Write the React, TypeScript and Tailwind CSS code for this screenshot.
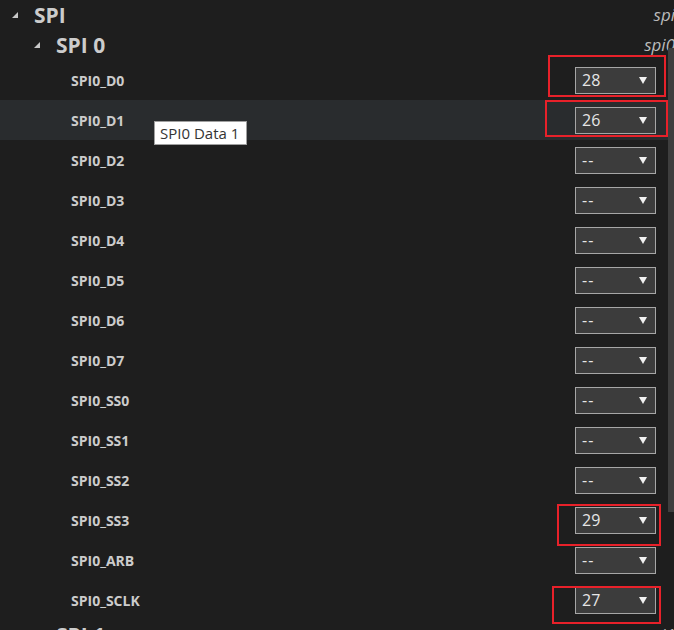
import { CSSProperties } from 'react';

type Pin = {
  name: string;
  value: string;
  mark?: { left: number; top: number; width: number; height: number };
};

const pins: Pin[] = [
  { name: 'SPI0_D0', value: '28', mark: { left: -27, top: -12, width: 118, height: 42 } },
  { name: 'SPI0_D1', value: '26', mark: { left: -30, top: -7, width: 123, height: 37 } },
  { name: 'SPI0_D2', value: '--' },
  { name: 'SPI0_D3', value: '--' },
  { name: 'SPI0_D4', value: '--' },
  { name: 'SPI0_D5', value: '--' },
  { name: 'SPI0_D6', value: '--' },
  { name: 'SPI0_D7', value: '--' },
  { name: 'SPI0_SS0', value: '--' },
  { name: 'SPI0_SS1', value: '--' },
  { name: 'SPI0_SS2', value: '--' },
  { name: 'SPI0_SS3', value: '29', mark: { left: -18, top: -3, width: 104, height: 42 } },
  { name: 'SPI0_ARB', value: '--' },
  { name: 'SPI0_SCLK', value: '27', mark: { left: -23, top: -1, width: 109, height: 38 } },
];

function Twisty() {
  return (
    <svg width="7" height="7" viewBox="0 0 7 7" className="shrink-0">
      <polygon points="6,0 6,6 0,6" fill="#c8c8c8" />
    </svg>
  );
}

function PinSelect({ pin }: { pin: Pin }) {
  const markStyle: CSSProperties | undefined = pin.mark
    ? { left: pin.mark.left, top: pin.mark.top, width: pin.mark.width, height: pin.mark.height }
    : undefined;
  return (
    <div className="relative">
      <div className="flex h-[27px] w-[81px] items-center justify-between border border-[#a6a6a6] bg-[#3c3c3c] pl-[6px] pr-[8px] text-[16px] text-[#e6e6e6]">
        <span className={pin.value === '--' ? 'tracking-[1px]' : ''}>{pin.value}</span>
        <svg width="8" height="7" viewBox="0 0 8 7">
          <polygon points="0,0 8,0 4,7" fill="#f0f0f0" />
        </svg>
      </div>
      {pin.mark && (
        <div className="absolute border-2 border-[#e8212a]" style={markStyle} />
      )}
    </div>
  );
}

export default function App() {
  return (
    <div
      className="relative h-[630px] w-[674px] overflow-hidden bg-[#1e1e1e] text-[#cccccc]"
      style={{ fontFamily: '"Open Sans", "Noto Sans", sans-serif' }}
    >
      {/* SPI group */}
      <div className="flex h-[30px] items-center pl-[12px]">
        <Twisty />
        <span className="ml-[15px] text-[21px] font-bold leading-none">SPI</span>
        <span className="ml-auto mr-[-1px] text-[17px] italic text-[#bbbbbb]">spi</span>
      </div>

      {/* SPI 0 */}
      <div className="flex h-[30px] items-center pl-[34px]">
        <Twisty />
        <span className="ml-[15px] text-[21px] font-bold leading-none">SPI 0</span>
        <span className="ml-auto mr-[-1px] text-[17px] italic text-[#bbbbbb]">spi0</span>
      </div>

      {pins.map((pin, i) => (
        <div
          key={pin.name}
          className={`flex h-[40px] items-center pl-[71px] pr-[18px] ${i === 1 ? 'bg-[#292c2e]' : ''}`}
        >
          <span className="text-[14px] font-bold">{pin.name}</span>
          <div className="ml-auto">
            <PinSelect pin={pin} />
          </div>
        </div>
      ))}

      {/* SPI 1, cut off at the bottom */}
      <div className="flex h-[30px] items-center pl-[34px]">
        <Twisty />
        <span className="ml-[15px] text-[21px] font-bold leading-none">SPI 1</span>
        <span className="ml-auto mr-[-1px] text-[17px] italic text-[#bbbbbb]">spi1</span>
      </div>

      {/* scrollbar thumb */}
      <div className="absolute right-0 top-[48px] h-[464px] w-[6px] bg-[#3e3e3e]" />

      {/* tooltip */}
      <div className="absolute left-[154px] top-[121px] flex h-[24px] w-[93px] items-center border border-[#a0a0a0] bg-white pl-[5px] text-[15px] text-[#333333]">
        SPI0 Data 1
      </div>
    </div>
  );
}
